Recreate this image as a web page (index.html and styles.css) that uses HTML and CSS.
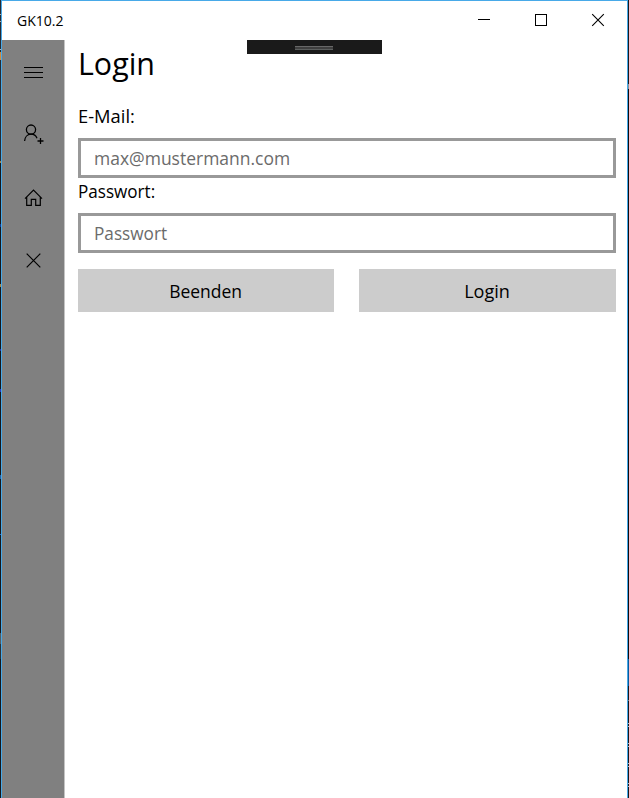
FILE: index.html
```html
<!DOCTYPE html>
<html lang="de">
<head>
<meta charset="utf-8">
<title>GK10.2</title>
<link rel="stylesheet" href="styles.css">
</head>
<body>
<div class="desktop">
  <div class="backdrop backdrop-left"></div>
  <div class="window">
    <header class="titlebar">
      <span class="title"><span class="t t-title">GK10.2</span></span>
      <div class="controls">
        <svg width="57" height="39" viewBox="0 0 57 39" shape-rendering="crispEdges"><path d="M22 18.5h12" stroke="#000"/></svg>
        <svg width="57" height="39" viewBox="0 0 57 39" shape-rendering="crispEdges"><path d="M22.5 13.5h11v11h-11z" fill="none" stroke="#000"/></svg>
        <svg width="57" height="39" viewBox="0 0 57 39"><path d="M22.2 13.2l11.6 11.6M33.8 13.2L22.2 24.8" stroke="#000" stroke-width="1.1"/></svg>
      </div>
    </header>
    <div class="body">
      <nav class="sidebar">
        <svg width="62" height="64" viewBox="0 0 62 64" shape-rendering="crispEdges"><path d="M22 27.5h19M22 32.5h19M22 37.5h19" stroke="#000"/></svg>
        <svg width="62" height="62" viewBox="0 0 62 62" fill="none" stroke="#000" stroke-width="1.3"><circle cx="29" cy="25.6" r="4.6"/><path d="M22.6 37c.3-4 2.9-6.8 6.4-6.8 2.8 0 5 1.400 6 4M38.500 34v6M35.500 37h6"/></svg>
        <svg width="62" height="63" viewBox="0 0 62 63" fill="none" stroke="#000" stroke-width="1.2"><path d="M23 32.700l8.500-8.500 8.500 8.500M24.700 31.300v8h4.600v-6h4.400v6h4.600v-8"/></svg>
        <svg width="62" height="62" viewBox="0 0 62 62"><path d="M24.700 24.700l13.600 13.600M38.300 24.700L24.700 38.300" stroke="#000" stroke-width="1.2"/></svg>
      </nav>
      <main class="page">
        <div class="debug-bar"><i></i></div>
        <h1><span class="t t-heading">Login</span></h1>
        <label for="mail"><span class="t t-mail">E-Mail:</span></label>
        <div class="field" id="mail"><span class="t t-address">max@mustermann.com</span></div>
        <label class="second" for="pw"><span class="t t-pw">Passwort:</span></label>
        <div class="field" id="pw"><span class="t t-pwhint">Passwort</span></div>
        <div class="actions">
          <button><span class="t t-quit">Beenden</span></button>
          <button><span class="t t-login">Login</span></button>
        </div>
      </main>
    </div>
  </div>
  <div class="backdrop backdrop-right"></div>
</div>
</body>
</html>
```
FILE: styles.css
```css
* { box-sizing: border-box; }
body { margin: 0; font-family: "Open Sans", "Noto Sans", sans-serif; color: #000; overflow: hidden; }
svg { display: block; }
.desktop { display: grid; grid-template-columns: 1px 1fr 1px; height: 798px; }
.backdrop { background: #16191e; }
.backdrop-left {
  background: linear-gradient(#252a33 0 14px, #aaa 14px 15px, #252a33 15px 21px, #aaa 21px 22px, #252a33 22px 49px, #bbb 49px 50px, #252a33 50px 52px, #d48a3c 52px 60px, #252a33 60px 161px, #a98545 161px 163px, #15171c 163px 224px, #173b8f 224px 227px, #15171c 227px 284px, #a98545 284px 287px, #15171c 287px 349px, #2830a0 349px 351px, #15171c 351px 389px, #2838c0 389px 392px, #15171c 392px 475px, #2860a0 475px 479px, #15171c 479px 534px, #2468c8 534px 535px, #15171c 535px 633px, #555b60 633px 644px, #2b3036 644px 659px, #15171c 659px);
}
.backdrop-right {
  background: linear-gradient(#16191e 0 84px, #8a9296 84px 89px, #0a0c10 89px 659px, #07599c 659px 686px, #15171c 686px 700px, #777 700px 701px, #15171c 701px 723px, #bbb 723px 724px, #15171c 724px 726px, #bbb 726px 727px, #15171c 727px 743px, #bbb 743px 744px, #15171c 744px 746px, #bbb 746px 747px, #15171c 747px 763px, #bbb 763px 764px, #15171c 764px 766px, #bbb 766px 767px, #15171c 767px 783px, #bbb 783px 784px, #15171c 784px 786px, #bbb 786px 787px, #15171c 787px);
}
.window { display: flex; flex-direction: column; background: #fff; border: 1px solid #47a9e8; border-bottom: 0; min-width: 0; }
.titlebar { height: 39px; display: flex; justify-content: space-between; }
.title { padding-left: 15px; font-size: 15px; line-height: 39px; }
.controls { display: flex; }
.body { flex: 1; display: flex; }
.sidebar { width: 63px; background: #808080; border-right: 1px solid #c4c4c4; }
.page { flex: 1; position: relative; padding: 0 11px 0 13px; }
.debug-bar { position: absolute; left: 182px; top: 0; width: 135px; height: 14px; background: #1a1a1a; }
.debug-bar i { position: absolute; left: 48px; top: 6px; width: 38px; height: 4px; background: #3f3f3f; border-top: 1px solid #686868; border-bottom: 1px solid #5d605f; }
/* Condensed slightly per label to get Segoe-like proportions */
.t { display: inline-block; white-space: nowrap; transform-origin: left center; }
.t-title { transform: scaleX(.935); }
.t-heading { transform: scaleX(.98); }
.t-mail { transform: scaleX(.965); }
.t-address { transform: scaleX(.92); }
.t-pw { transform: scaleX(.9); }
.t-pwhint { transform: scaleX(.905); }
.t-quit { transform: scaleX(.92); transform-origin: center; }
.t-login { transform: scaleX(.95); transform-origin: center; }
h1 { margin: 0; height: 60px; font-size: 31px; line-height: 46px; font-weight: 400; }
label { display: block; height: 38px; font-size: 19px; line-height: 33px; }
.second { height: 35px; line-height: 27px; }
.field { height: 40px; border: 3px solid #999; padding-left: 13px; font-size: 19px; line-height: 34px; color: #6b6b6b; }
.actions { display: grid; grid-template-columns: 256px 257px; justify-content: space-between; margin-top: 16px; }
button { height: 43px; border: 0; padding: 1px 0 0; background: #ccc; color: #000; font: 19px/42px "Open Sans", sans-serif; }
```
